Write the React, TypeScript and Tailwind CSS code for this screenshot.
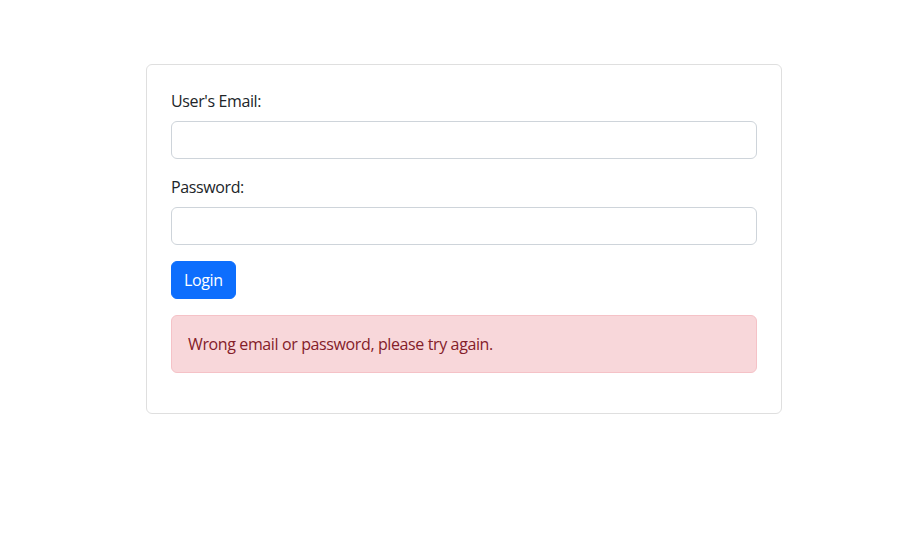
import React, { useState } from 'react';

const App: React.FC = () => {
  const [email, setEmail] = useState('');
  const [password, setPassword] = useState('');

  return (
    <div className="min-h-[551px] bg-white text-[#212529] text-base leading-6 tracking-[-0.38px]" style={{ fontFamily: '"Segoe UI", "Open Sans", sans-serif' }}>
      <div className="pt-16 pl-[146px]">
        <div className="w-[636px] border border-[#dfdfdf] rounded-md bg-white p-6">
          <form onSubmit={(e) => e.preventDefault()}>
            <div className="mb-4">
              <label className="block mb-2">User's Email:</label>
              <input
                type="email"
                value={email}
                onChange={(e) => setEmail(e.target.value)}
                className="block w-full h-[38px] px-3 border border-[#ced4da] rounded-md outline-none"
              />
            </div>
            <div className="mb-4">
              <label className="block mb-2">Password:</label>
              <input
                type="password"
                value={password}
                onChange={(e) => setPassword(e.target.value)}
                className="block w-full h-[38px] px-3 border border-[#ced4da] rounded-md outline-none"
              />
            </div>
            <button type="submit" className="h-[38px] px-3 bg-[#0d6efd] text-white rounded-md border border-[#0d6efd]">
              Login
            </button>
            {/* mensaje de error */}
            <div className="mt-4 mb-4 p-4 bg-[#f8d7da] border border-[#f5c2c7] text-[#842029] rounded-md">
              Wrong email or password, please try again.
            </div>
          </form>
        </div>
      </div>
    </div>
  );
};

export default App;
